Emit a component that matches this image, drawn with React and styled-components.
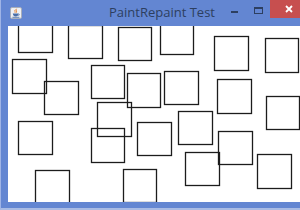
import React from "react"
import styled, { createGlobalStyle } from "styled-components"

const GlobalStyle = createGlobalStyle`
  html, body {
    margin: 0;
    padding: 0;
    background: #ffffff;
    overflow: hidden;
  }
`

const Window = styled.div`
  width: 300px;
  height: 210px;
  box-sizing: border-box;
  display: flex;
  flex-direction: column;
  background: #6386d2;
  border-left: 1px solid #9fb4e6;
  border-bottom: 2px solid #a9bbe4;
  font-family: "Open Sans", "Noto Sans", sans-serif;
`

const TitleBar = styled.div`
  height: 26px;
  display: flex;
  align-items: flex-start;
  flex-shrink: 0;
`

const AppIcon = styled.svg`
  width: 12px;
  height: 12px;
  margin: 7px 0 0 9px;
  flex-shrink: 0;
`

const Title = styled.div`
  flex: 1;
  min-width: 0;
  overflow: hidden;
  padding: 3px 0 0 87px;
  font-size: 13px;
  line-height: 18px;
  color: #2d3f60;
  white-space: nowrap;
`

const CaptionButton = styled.div`
  width: ${(p) => p.$w}px;
  height: 18px;
  flex-shrink: 0;
  display: flex;
  align-items: center;
  justify-content: ${(p) => (p.$close ? "flex-start" : "center")};
  padding-left: ${(p) => (p.$close ? "15px" : "0")};
  box-sizing: border-box;
  background: ${(p) => (p.$close ? "#c74f4f" : "transparent")};
`

const MinGlyph = styled.div`
  width: 7px;
  height: 2px;
  margin-top: 6px;
  background: #2d3f60;
`

const MaxGlyph = styled.div`
  width: 7px;
  height: 4px;
  margin-top: 2px;
  border: 1px solid #2d3f60;
  border-top-width: 2px;
`

const Body = styled.div`
  flex: 1;
  display: flex;
  padding: 0 0 6px 7px;
`

const Canvas = styled.div`
  flex: 1;
  background: #ffffff;
  overflow: hidden;
`

// page coords of each square (left, top, right, bottom)
const squares = [
  [18, 19, 52, 52],
  [68, 25, 102, 58],
  [118, 27, 151, 60],
  [160, 21, 193, 54],
  [214, 36, 248, 70],
  [265, 38, 298, 72],
  [12, 59, 46, 93],
  [44, 81, 78, 114],
  [91, 65, 124, 98],
  [97, 102, 131, 136],
  [127, 73, 160, 107],
  [18, 121, 52, 154],
  [91, 128, 124, 162],
  [137, 122, 171, 155],
  [164, 71, 198, 104],
  [217, 79, 251, 113],
  [266, 96, 299, 129],
  [178, 111, 212, 144],
  [218, 131, 252, 164],
  [185, 152, 219, 185],
  [257, 154, 291, 188],
  [35, 170, 69, 203],
  [123, 169, 156, 202],
]

const OX = 8
const OY = 26

const App = () => {
  return (
    <>
      <GlobalStyle />
      <Window>
        <TitleBar>
          <AppIcon viewBox="0 0 12 12">
            <rect x="0.5" y="0.5" width="11" height="11" rx="1.5" fill="#eef0f4" stroke="#a8aebb" />
            <path d="M6.5 1.8 C5 3.2 7.6 4 6 5.8" stroke="#e2761b" strokeWidth="1" fill="none" />
            <path d="M5 3 C4.3 4 5.6 4.6 4.8 5.6" stroke="#e2761b" strokeWidth="0.8" fill="none" />
            <path d="M2.8 6.6 H8.6 C8.4 8.6 7.4 9.4 5.7 9.4 C4 9.4 3 8.6 2.8 6.6 Z" fill="#4a6fa8" />
            <path d="M8.4 7 C9.8 7 9.8 8.4 8.2 8.4" stroke="#4a6fa8" strokeWidth="0.7" fill="none" />
            <rect x="2.4" y="9.8" width="7" height="0.9" fill="#4a6fa8" />
          </AppIcon>
          <Title>PaintRepaint Test</Title>
          <CaptionButton $w={25}>
            <MinGlyph />
          </CaptionButton>
          <CaptionButton $w={23}>
            <MaxGlyph />
          </CaptionButton>
          <CaptionButton $w={30} $close>
            <svg width="8" height="8" viewBox="0 0 8 8">
              <path d="M1 1 L7 7 M7 1 L1 7" stroke="#ffffff" strokeWidth="1.8" />
            </svg>
          </CaptionButton>
        </TitleBar>
        <Body>
          <Canvas>
            <svg width="292" height="176" style={{ display: "block" }}>
              {squares.map(([x1, y1, x2, y2], i) => (
                <rect
                  key={i}
                  x={x1 - OX + 0.5}
                  y={y1 - OY + 0.5}
                  width={x2 - x1}
                  height={y2 - y1}
                  fill="none"
                  stroke="#1c1c1c"
                  strokeWidth="1.3"
                />
              ))}
            </svg>
          </Canvas>
        </Body>
      </Window>
    </>
  )
}

export default App
